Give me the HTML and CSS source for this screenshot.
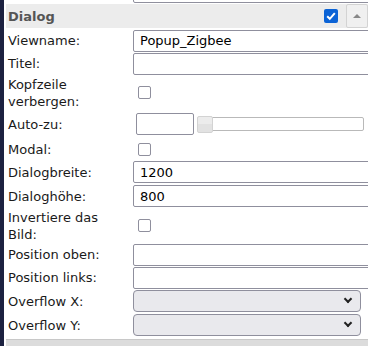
FILE: index.html
```html
<!DOCTYPE html>
<html>
  <head>
    <title>Dialog</title>
    <link rel="stylesheet" href="styles.css">
  </head>
  <body>
    <div class="strip"></div>
    <div class="panel">
      <div class="prev-row"><span class="prev-input"></span></div>
      <div class="group-head">
        <span class="group-title">Dialog</span>
        <span class="head-check">
          <svg width="14" height="14" viewBox="0 0 14 14">
            <rect width="14" height="14" rx="2" fill="#0b63d6" />
            <path d="M3.2 7.2 L5.8 9.8 L10.8 4.2" fill="none" stroke="#fff" stroke-width="2" />
          </svg>
        </span>
        <button class="collapse-btn"><span class="tri"></span></button>
      </div>
      <table class="props">
        <tr>
          <td class="lbl">Viewname:</td>
          <td><input type="text" class="txt" value="Popup_Zigbee"></td>
        </tr>
        <tr>
          <td class="lbl">Titel:</td>
          <td><input type="text" class="txt"></td>
        </tr>
        <tr class="two">
          <td class="lbl">Kopfzeile verbergen:</td>
          <td><span class="chk"></span></td>
        </tr>
        <tr class="auto">
          <td class="lbl">Auto-zu:</td>
          <td>
            <div class="auto-zu">
              <input type="text" class="small-txt">
              <div class="slider"><span class="thumb"></span></div>
            </div>
          </td>
        </tr>
        <tr class="short">
          <td class="lbl">Modal:</td>
          <td><span class="chk"></span></td>
        </tr>
        <tr class="wide">
          <td class="lbl">Dialogbreite:</td>
          <td><input type="text" class="txt" value="1200"></td>
        </tr>
        <tr class="wide">
          <td class="lbl">Dialogh&ouml;he:</td>
          <td><input type="text" class="txt" value="800"></td>
        </tr>
        <tr class="two">
          <td class="lbl">Invertiere das<br>Bild:</td>
          <td><span class="chk"></span></td>
        </tr>
        <tr>
          <td class="lbl">Position oben:</td>
          <td><input type="text" class="txt"></td>
        </tr>
        <tr>
          <td class="lbl">Position links:</td>
          <td><input type="text" class="txt"></td>
        </tr>
        <tr class="wide">
          <td class="lbl">Overflow X:</td>
          <td><div class="sel"><span class="chev"></span></div></td>
        </tr>
        <tr class="wide">
          <td class="lbl">Overflow Y:</td>
          <td><div class="sel"><span class="chev"></span></div></td>
        </tr>
      </table>
      <div class="next-head"></div>
    </div>
  </body>
</html>
```

FILE: styles.css
```css
body {
  margin: 0;
  display: flex;
  width: 368px;
  height: 346px;
  overflow: hidden;
  background: #fff;
  font-family: "DejaVu Sans", Verdana, sans-serif;
  font-size: 13px;
  color: #1a1a1a;
}

.strip {
  width: 4px;
  flex: none;
  background-color: #1c2140;
}

.panel {
  flex: 1;
  padding-left: 2px;
  overflow: hidden;
}

/* bottom of the row above */
.prev-row {
  height: 4px;
  position: relative;
}
.prev-input {
  position: absolute;
  left: 127px;
  right: -10px;
  top: -20px;
  height: 21px;
  border: 1px solid #8f8f9d;
  border-radius: 2px;
}

/* Group header */
.group-head {
  height: 24px;
  background-color: #ececec;
  display: flex;
  align-items: center;
}
.group-title {
  flex: 1;
  padding-left: 2px;
  font-weight: bold;
  color: #555;
}
.head-check {
  display: flex;
  margin-right: 8px;
}
.collapse-btn {
  width: 22px;
  height: 24px;
  padding: 0;
  border: 1px solid #d3d3d3;
  border-radius: 2px;
  background-color: #f0f0f0;
  display: flex;
  align-items: center;
  justify-content: center;
}
.tri {
  width: 0;
  height: 0;
  border-left: 4px solid transparent;
  border-right: 4px solid transparent;
  border-bottom: 4px solid #888;
}

/* Property rows */
.props {
  border-collapse: collapse;
  width: 372px;
  margin-top: 1px;
}
.props tr {
  height: 23px;
}
.props tr.wide {
  height: 24px;
}
.props tr.short {
  height: 22px;
}
.props tr.auto {
  height: 28px;
}
.props tr.two {
  height: 35px;
}
.props td {
  padding: 0;
  vertical-align: middle;
}
.props td.lbl {
  width: 127px;
  padding-left: 2px;
  line-height: 17px;
  box-sizing: border-box;
}

.txt {
  display: block;
  width: 100%;
  box-sizing: border-box;
  height: 22px;
  border: 1px solid #8f8f9d;
  border-radius: 2px;
  padding: 0 6px;
  font-family: "DejaVu Sans", Verdana, sans-serif;
  font-size: 13px;
  color: #000;
}

.chk {
  display: block;
  width: 11px;
  height: 11px;
  margin-left: 5px;
  border: 1.5px solid #8f8f9d;
  border-radius: 2px;
}

.auto-zu {
  display: flex;
  align-items: center;
  padding-left: 3px;
}
.small-txt {
  width: 58px;
  height: 22px;
  box-sizing: border-box;
  border: 1px solid #8f8f9d;
  border-radius: 2px;
}
.slider {
  position: relative;
  margin-left: 3px;
  width: 167px;
  height: 14px;
  box-sizing: border-box;
  border: 1px solid #b9b9b9;
  border-radius: 2px;
}
.thumb {
  position: absolute;
  left: -1px;
  top: -2px;
  width: 16px;
  height: 17px;
  box-sizing: border-box;
  border: 1px solid #d3d3d3;
  border-radius: 2px;
  background: linear-gradient(#ececec 50%, #e2e2e2 50%);
}

.sel {
  width: 228px;
  height: 22px;
  box-sizing: border-box;
  border: 1px solid #8f8f9d;
  border-radius: 4px;
  background-color: #e9e9ed;
  display: flex;
  align-items: center;
  justify-content: flex-end;
  padding-right: 9px;
}
.chev {
  width: 4px;
  height: 4px;
  border-right: 2px solid #222;
  border-bottom: 2px solid #222;
  transform: translateY(-2px) rotate(45deg);
}

.next-head {
  margin-top: 2px;
  height: 10px;
  background-color: #dcdcdc;
  border-top: 1px solid #c8c8c8;
}
```
